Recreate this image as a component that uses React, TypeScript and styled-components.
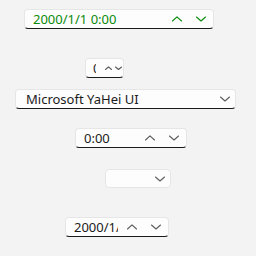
import React from 'react';
import styled, { createGlobalStyle } from 'styled-components';

const GlobalStyle = createGlobalStyle`
  html, body {
    margin: 0;
    background: #f3f3f3;
    font-family: 'Noto Sans', 'Liberation Sans', sans-serif;
  }
`;

const Page = styled.div`
  width: 256px;
  height: 256px;
  display: flex;
  flex-direction: column;
  align-items: flex-start;
  overflow: hidden;
`;

const Field = styled.div<{ $x: number; $top: number; $w: number; $h?: number; $line?: boolean; $color?: string }>`
  box-sizing: border-box;
  margin-left: ${({ $x }) => $x}px;
  margin-top: ${({ $top }) => $top}px;
  width: ${({ $w }) => $w}px;
  height: ${({ $h }) => $h ?? 20}px;
  display: flex;
  align-items: center;
  background: #fdfdfd;
  border: 1px solid #e6e6e6;
  border-bottom: 1px solid ${({ $line }) => ($line ? '#1a1a1a' : '#e6e6e6')};
  border-radius: 4px;
  color: ${({ $color }) => $color ?? '#1b1b1b'};
`;

const Value = styled.div<{ $pl?: number; $pr?: number }>`
  flex: 1;
  min-width: 0;
  overflow: hidden;
  white-space: nowrap;
  margin-left: ${({ $pl }) => $pl ?? 8}px;
  margin-right: ${({ $pr }) => $pr ?? 0}px;
  font-size: 13px;
  line-height: 18px;
`;

const SpinButton = styled.div<{ $w?: number }>`
  width: ${({ $w }) => $w ?? 24}px;
  height: 100%;
  flex-shrink: 0;
  display: flex;
  align-items: center;
  justify-content: center;
`;

const DropButton = styled.div`
  width: 20px;
  height: 100%;
  flex-shrink: 0;
  display: flex;
  align-items: center;
  justify-content: center;
  color: #5c5c5c;
`;

const Chevron = ({ up, size = 10, color }: { up?: boolean; size?: number; color?: string }) => {
  const h = size / 2;
  return (
    <svg width={size} height={h + 1} viewBox={`0 0 ${size} ${h + 1}`} fill="none">
      <polyline
        points={up ? `0.5,${h} ${size / 2},0.8 ${size - 0.5},${h}` : `0.5,1 ${size / 2},${h} ${size - 0.5},1`}
        stroke={color ?? 'currentColor'}
        strokeWidth={1.1}
        strokeLinecap="round"
        strokeLinejoin="round"
      />
    </svg>
  );
};

const App: React.FC = () => {
  const gray = '#5c5c5c';
  return (
    <>
      <GlobalStyle />
      <Page>
        <Field $x={24} $top={9} $w={190} $line $color="#0b8a0b">
          <Value>2000/1/1 0:00</Value>
          <SpinButton><Chevron up /></SpinButton>
          <SpinButton><Chevron /></SpinButton>
        </Field>

        <Field $x={85} $top={29} $w={39} $line>
          <Value $pl={7} $pr={7}>0:00</Value>
          <SpinButton $w={10}><Chevron up size={7} color={gray} /></SpinButton>
          <SpinButton $w={10}><Chevron size={7} color={gray} /></SpinButton>
        </Field>

        <Field $x={15} $top={11} $w={221} $line>
          <Value $pl={10}>Microsoft YaHei UI</Value>
          <DropButton><Chevron /></DropButton>
        </Field>

        <Field $x={75} $top={19} $w={112} $line>
          <Value>0:00</Value>
          <SpinButton><Chevron up color={gray} /></SpinButton>
          <SpinButton><Chevron color={gray} /></SpinButton>
        </Field>

        <Field $x={105} $top={21} $w={66} $h={19}>
          <Value />
          <DropButton><Chevron /></DropButton>
        </Field>

        <Field $x={65} $top={29} $w={104} $line>
          <Value $pr={2}>2000/1/1 0:00</Value>
          <SpinButton><Chevron up color={gray} /></SpinButton>
          <SpinButton><Chevron color={gray} /></SpinButton>
        </Field>
      </Page>
    </>
  );
};

export default App;
